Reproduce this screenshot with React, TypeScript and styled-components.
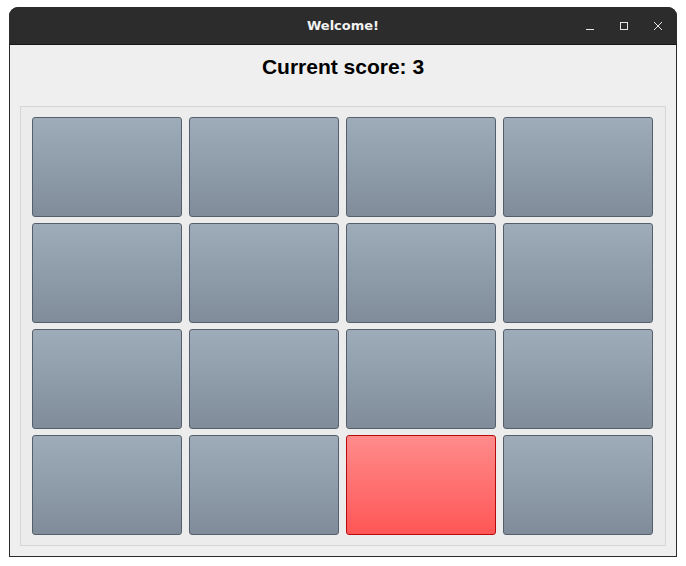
import React from "react";
import styled, {createGlobalStyle} from "styled-components";

const GlobalStyle = createGlobalStyle`
  html, body {
    margin: 0;
    padding: 0;
    background: #ffffff;
  }
`;

const Page = styled.div`
  padding: 7px 0 0 9px;
`;

const Window = styled.div`
  width: 668px;
  height: 550px;
  box-sizing: border-box;
  display: flex;
  flex-direction: column;
  border-radius: 9px 9px 0 0;
  overflow: hidden;
  background: #2b2b2b;
`;

const TitleBar = styled.div`
  height: 38px;
  flex: none;
  display: flex;
  align-items: center;
  justify-content: center;
  position: relative;
  background: #2c2c2c;
  border-bottom: 1px solid #181818;
  box-sizing: border-box;
  color: #f2f2f2;
  font-family: "DejaVu Sans", sans-serif;
  font-weight: bold;
  font-size: 13px;
`;

const Controls = styled.div`
  position: absolute;
  right: 9px;
  top: 0;
  height: 100%;
  display: flex;
  align-items: center;
  gap: 14px;
`;

const ControlButton = styled.div`
  width: 20px;
  height: 20px;
  display: flex;
  align-items: center;
  justify-content: center;
`;

const Body = styled.div`
  flex: 1;
  display: flex;
  flex-direction: column;
  background: #efefef;
  border: 1px solid #2a2a2a;
  border-top: none;
  padding: 0 10px 10px 10px;
`;

const Score = styled.div`
  height: 61px;
  flex: none;
  padding-top: 10px;
  box-sizing: border-box;
  text-align: center;
  font-family: "Liberation Sans", Arial, sans-serif;
  font-weight: bold;
  font-size: 21px;
  line-height: 24px;
  color: #000;
`;

const Board = styled.div`
  flex: 1;
  display: grid;
  grid-template-columns: repeat(4, 150px);
  grid-template-rows: repeat(4, 1fr);
  column-gap: 7px;
  row-gap: 6px;
  padding: 10px 11px;
  border: 1px solid #d6d6d6;
  background: #ececec;
`;

const Tile = styled.div<{ $active?: boolean }>`
  border-radius: 3px;
  border: 1px solid ${p => (p.$active ? "#b80a0a" : "#555f6b")};
  background: ${p =>
    p.$active
      ? "linear-gradient(to bottom, #ff8b8b, #ff5656)"
      : "linear-gradient(to bottom, #9eacba, #808c99)"};
`;

const tiles = Array.from({length: 16}, (_, i) => i);

export default function App() {
    return (
        <React.Fragment>
            <GlobalStyle/>
            <Page>
                <Window>
                    <TitleBar>
                        Welcome!
                        <Controls>
                            <ControlButton>
                                <svg width="10" height="10" viewBox="0 0 10 10">
                                    <line x1="1" y1="8.5" x2="9" y2="8.5" stroke="#e6e6e6" strokeWidth="1"/>
                                </svg>
                            </ControlButton>
                            <ControlButton>
                                <svg width="10" height="10" viewBox="0 0 10 10">
                                    <rect x="1.5" y="1.5" width="7" height="7" fill="none" stroke="#e6e6e6" strokeWidth="1"/>
                                </svg>
                            </ControlButton>
                            <ControlButton>
                                <svg width="10" height="10" viewBox="0 0 10 10">
                                    <path d="M1 1 L9 9 M9 1 L1 9" stroke="#e6e6e6" strokeWidth="1"/>
                                </svg>
                            </ControlButton>
                        </Controls>
                    </TitleBar>
                    <Body>
                        <Score>Current score: 3</Score>
                        <Board>
                            {tiles.map(i => (
                                <Tile key={i} $active={i === 14}/>
                            ))}
                        </Board>
                    </Body>
                </Window>
            </Page>
        </React.Fragment>
    );
}
